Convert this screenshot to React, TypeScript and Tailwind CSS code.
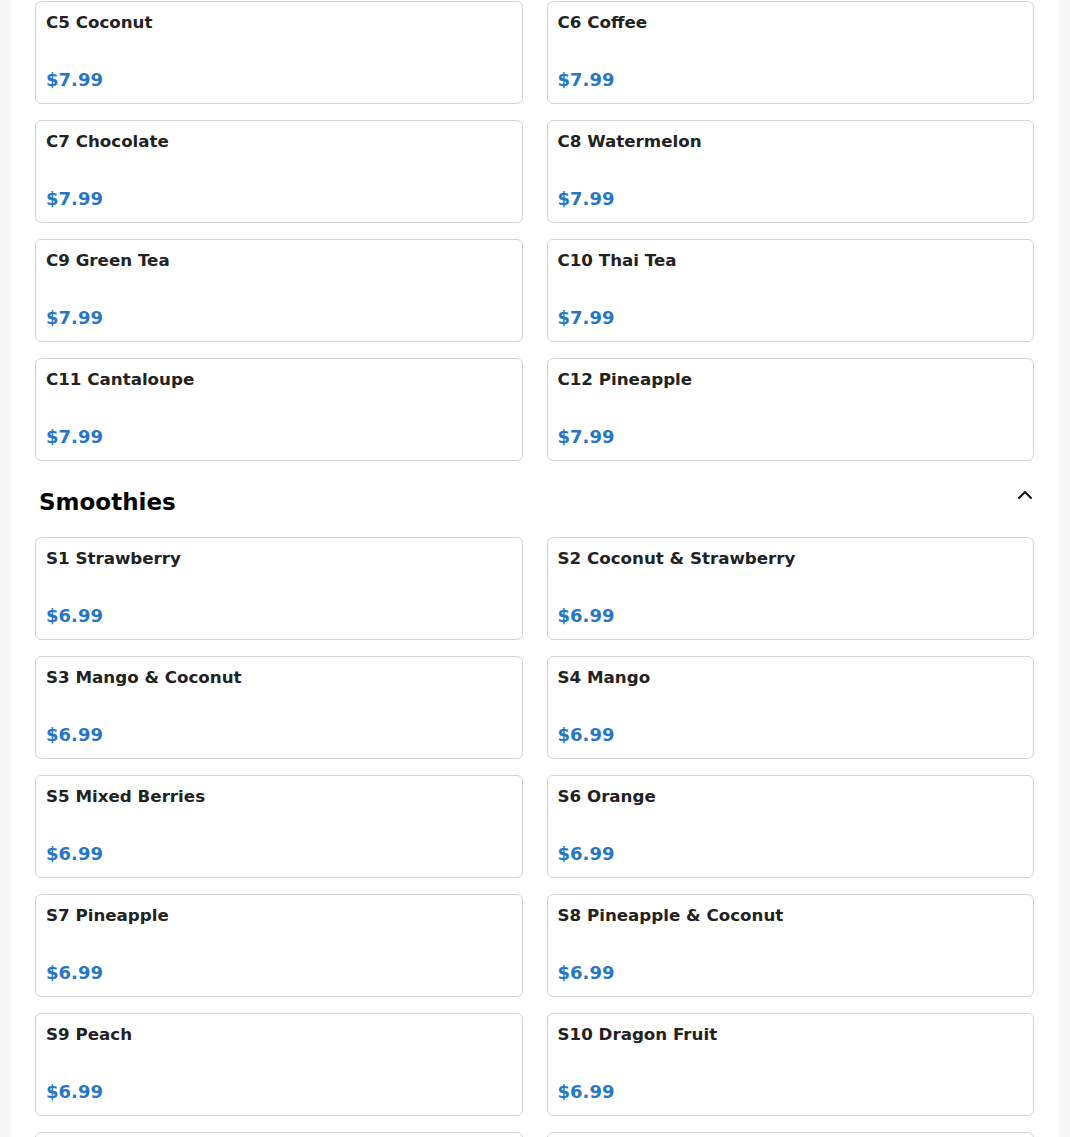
import { ChevronUp } from "lucide-react";

interface MenuItem {
  name: string;
  price: string;
}

const coffeeItems: MenuItem[] = [
  { name: "C5 Coconut", price: "$7.99" },
  { name: "C6 Coffee", price: "$7.99" },
  { name: "C7 Chocolate", price: "$7.99" },
  { name: "C8 Watermelon", price: "$7.99" },
  { name: "C9 Green Tea", price: "$7.99" },
  { name: "C10 Thai Tea", price: "$7.99" },
  { name: "C11 Cantaloupe", price: "$7.99" },
  { name: "C12 Pineapple", price: "$7.99" },
];

const smoothieItems: MenuItem[] = [
  { name: "S1 Strawberry", price: "$6.99" },
  { name: "S2 Coconut & Strawberry", price: "$6.99" },
  { name: "S3 Mango & Coconut", price: "$6.99" },
  { name: "S4 Mango", price: "$6.99" },
  { name: "S5 Mixed Berries", price: "$6.99" },
  { name: "S6 Orange", price: "$6.99" },
  { name: "S7 Pineapple", price: "$6.99" },
  { name: "S8 Pineapple & Coconut", price: "$6.99" },
  { name: "S9 Peach", price: "$6.99" },
  { name: "S10 Dragon Fruit", price: "$6.99" },
  { name: "S11 Passion Fruit", price: "$6.99" },
  { name: "S12 Kiwi", price: "$6.99" },
];

function ItemCard({ item }: { item: MenuItem }) {
  return (
    <div className="h-[103px] flex flex-col justify-between border border-[#d4d4d4] rounded-md bg-white px-[10px] pt-[10px] pb-[13px]">
      <div className="text-[16.7px] leading-5 font-bold text-[#222222]">
        {item.name}
      </div>
      <div className="text-[18px] leading-5 font-bold text-[#2877c6]">
        {item.price}
      </div>
    </div>
  );
}

function ItemGrid({ items }: { items: MenuItem[] }) {
  return (
    <div className="grid grid-cols-2 gap-x-6 gap-y-4">
      {items.map((item) => (
        <ItemCard key={item.name} item={item} />
      ))}
    </div>
  );
}

export default function App() {
  return (
    <div
      className="bg-[#f7f7f7] px-[11px] h-[1137px] overflow-hidden"
      style={{ fontFamily: '"DejaVu Sans", sans-serif' }}
    >
      <div className="bg-white pl-6 pr-[25px] pt-[1px] pb-10">
        <ItemGrid items={coffeeItems} />

        {/* Smoothies section */}
        <div className="flex justify-between items-start pl-1 mt-[27px] mb-[21px]">
          <h2 className="text-[23px] leading-7 font-bold text-black">
            Smoothies
          </h2>
          <ChevronUp
            size={24}
            strokeWidth={2}
            className="text-[#111111] -mt-[5px] -mr-[3px]"
          />
        </div>

        <ItemGrid items={smoothieItems} />
      </div>
    </div>
  );
}
